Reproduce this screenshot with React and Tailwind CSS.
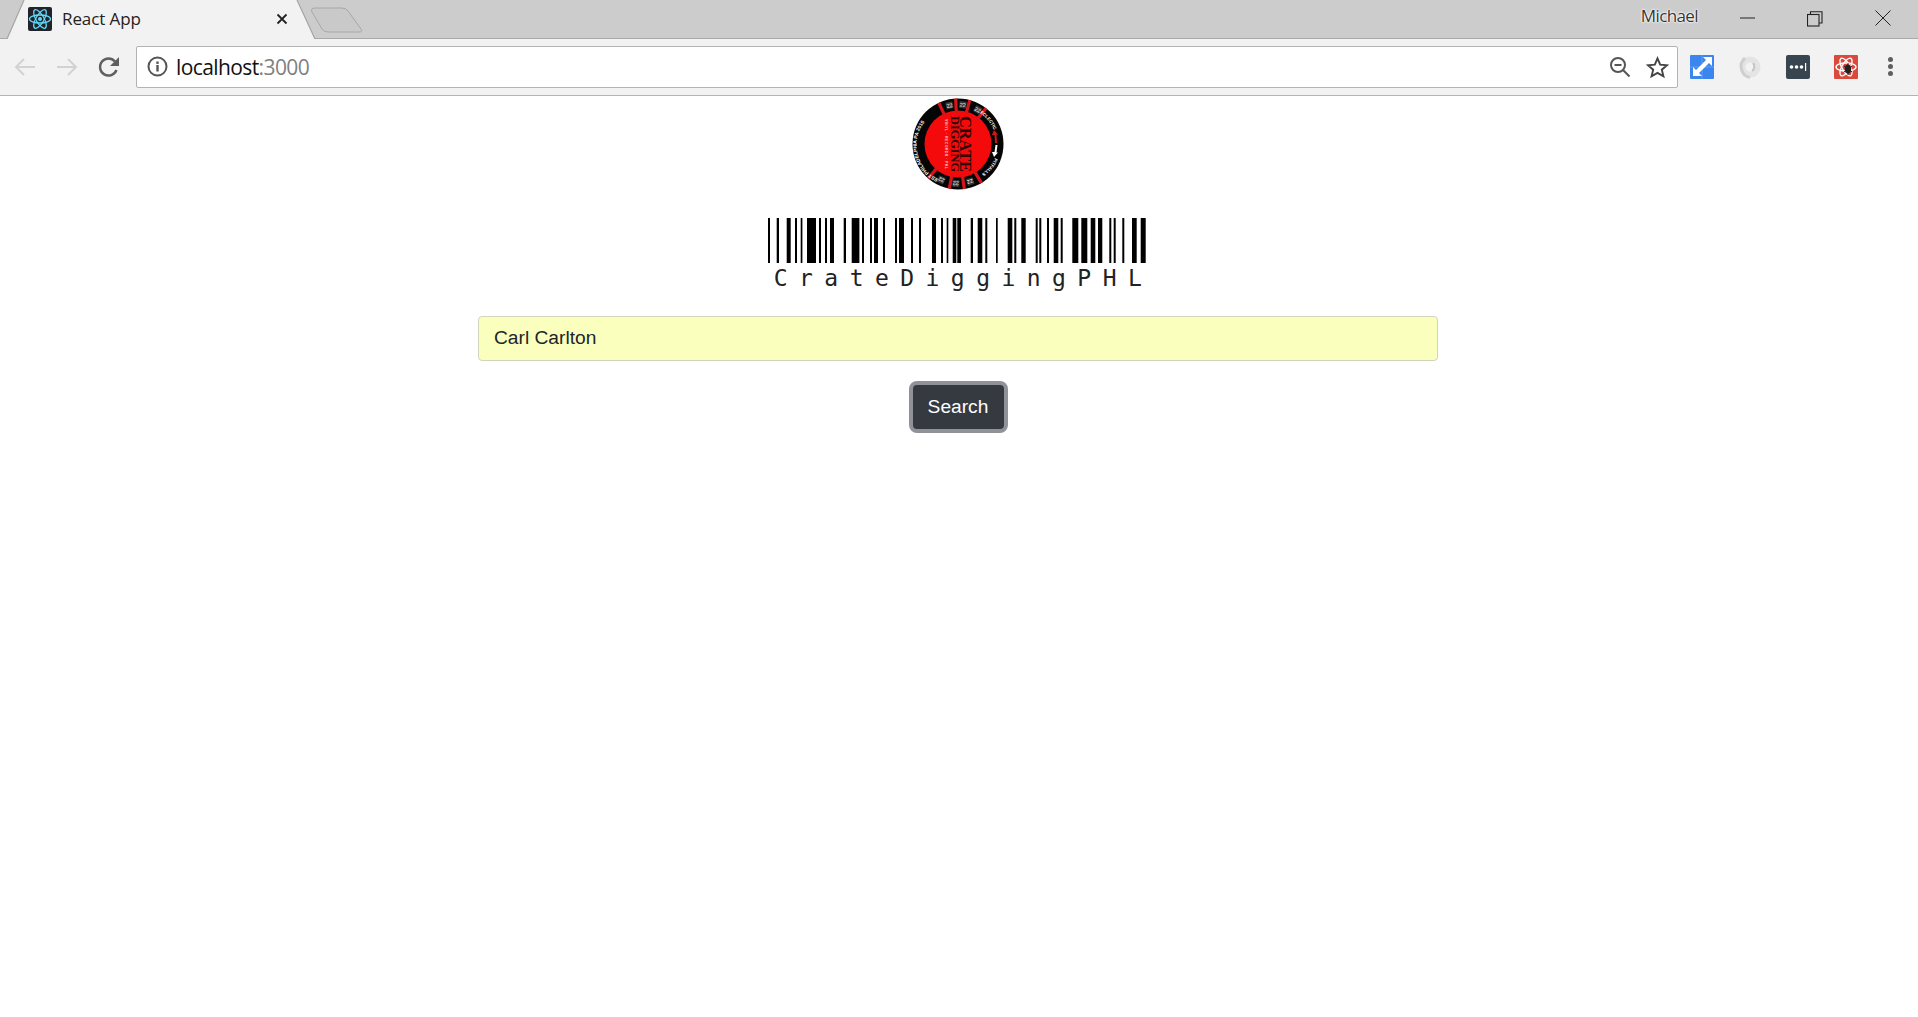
const bars = [
  [768, 770], [776.7, 779], [786.7, 790.7], [795, 797], [800.7, 802.4], [807, 816], [819, 821], [825, 827], [830, 834],
  [843.7, 846], [851.7, 859.4], [862, 864], [870, 872], [874, 878], [883, 885], [895, 897], [899, 904], [911, 913],
  [919, 921], [932, 936], [941, 943], [946.7, 948.3], [952.7, 956.3], [957.3, 961], [970.7, 973], [977.7, 982.3],
  [985.3, 987.3], [996, 997.7], [1007.7, 1012.3], [1014.3, 1016.3], [1021.3, 1025.7], [1035.7, 1037.7], [1039.3, 1041.3],
  [1047, 1049], [1053.7, 1058.3], [1060.7, 1062.7], [1072.3, 1078.3], [1081.3, 1087.3], [1090.7, 1095.3], [1098, 1102.3],
  [1109.3, 1111.3], [1113.7, 1115.7], [1122.3, 1124.3], [1132, 1136.7], [1140.7, 1145.7],
]

const spokes = [-115, -93, -75, -52, 131, 101, 82, 59]
const tiles = [-102.5, -83, -60, 115, 93, 72]

const Logo = () => (
  <svg width="92" height="92" viewBox="-46 -46 92 92">
    <circle r="45.5" fill="#050505" />
    <circle r="33.5" fill="#f40a0a" />
    {spokes.map((a) => (
      <rect key={a} x="31" y="-1.6" width="14.5" height="3.2" fill="#d8141a" transform={`rotate(${a})`} />
    ))}
    {tiles.map((a) => (
      <g key={a} transform={`rotate(${a}) translate(39.5 0) rotate(90)`}>
        <rect x="-3.5" y="-3.5" width="7" height="7" fill="#333" />
        <text textAnchor="middle" y="2" fontSize="5.5" fill="#fff" fontFamily="Liberation Sans, sans-serif">22</text>
      </g>
    ))}
    <defs>
      <path id="ring-left" d="M -20 35 A 37.5 37.5 0 0 1 -17 -34" />
      <path id="ring-right-top" d="M 22 -31 A 37.5 37.5 0 0 1 37 -11" />
      <path id="ring-right-bottom" d="M 37 14 A 37.5 37.5 0 0 1 22 31" />
    </defs>
    <text fontSize="4.9" fill="#fff" fontWeight="700" fontFamily="Liberation Sans, sans-serif">
      <textPath href="#ring-left">EST PHILADELPHIA PA 2015</textPath>
    </text>
    <text fontSize="4.4" fill="#fff" fontWeight="700" fontFamily="Liberation Sans, sans-serif">
      <textPath href="#ring-right-top">ECLECTIC</textPath>
    </text>
    <text fontSize="4.4" fill="#fff" fontWeight="700" fontFamily="Liberation Sans, sans-serif">
      <textPath href="#ring-right-bottom">PITFALLS</textPath>
    </text>
    <path d="M 37 -1 L 36.5 -9 L 34 -9 L 36 -14 L 40 -9.5 L 38.5 -9.5 L 39 -1 Z" fill="#d5141a" />
    <path d="M 37.5 1 L 36.5 8 L 34 8 L 36 13 L 40 8.5 L 38.5 8.5 L 39.5 1 Z" fill="#fff" />
    <g transform="rotate(90)" fontFamily="Liberation Serif, serif" fontWeight="700" textAnchor="middle">
      <text y="-2" fontSize="16" textLength="56" lengthAdjust="spacingAndGlyphs" fill="#2a0606">CRATE</text>
      <text y="7" fontSize="13" textLength="56" lengthAdjust="spacingAndGlyphs" fill="#2a0606">DIGGING</text>
      <text y="13" fontSize="3.6" textLength="50" fill="#ffc9c9" fontFamily="Liberation Sans, sans-serif">VINYL · RECORDS · PHL</text>
    </g>
  </svg>
)

const ReactFavicon = () => (
  <svg width="24" height="24" viewBox="0 0 24 24">
    <rect width="24" height="24" rx="2" fill="#20232a" />
    <g fill="none" stroke="#61dafb" strokeWidth="1.3">
      <ellipse cx="12" cy="12" rx="10.5" ry="4" />
      <ellipse cx="12" cy="12" rx="10.5" ry="4" transform="rotate(60 12 12)" />
      <ellipse cx="12" cy="12" rx="10.5" ry="4" transform="rotate(120 12 12)" />
    </g>
    <circle cx="12" cy="12" r="2" fill="#61dafb" />
  </svg>
)

const TabStrip = () => (
  <div className="relative flex h-[39px] items-center bg-[#cccccc] border-b border-[#a9a9a9]">
    <svg className="absolute left-0 top-0" width="370" height="39" viewBox="0 0 370 39">
      <path d="M7 39 L24 0 L297 0 L315 39 Z" fill="#f2f2f2" />
      <path d="M7 39 L24 0 M297 0 L315 39" stroke="#a5a5a5" strokeWidth="1.2" fill="none" />
      <path d="M315 8 L342 8 Q346 8 348 11 L361 29 Q363 32 359 32 L328 32 Q324 32 322 29 L312 12 Q310 8 315 8 Z" fill="#c9c9c9" stroke="#a8a8a8" strokeWidth="1" />
    </svg>
    <div className="relative ml-[28px]"><ReactFavicon /></div>
    <span className="relative ml-[10px] w-[214px] text-[17px] text-[#222] font-['Open_Sans',sans-serif] tracking-[-0.1px]">React App</span>
    <svg className="relative" width="12" height="12" viewBox="0 0 12 12">
      <path d="M1.5 1.5 L10.5 10.5 M10.5 1.5 L1.5 10.5" stroke="#222" strokeWidth="1.8" />
    </svg>
    <div className="ml-auto flex items-center">
      <span className="mr-[15px] -mt-[6px] text-[17px] text-[#333] font-['Open_Sans',sans-serif] tracking-[-0.6px] [text-shadow:0_0_1px_#fff,0_0_1px_#fff,0_0_2px_#fff,0_0_3px_#fff]">Michael</span>
      <div className="flex w-[68px] justify-center">
        <svg width="15" height="15" viewBox="0 0 15 15"><path d="M0 6 H15" stroke="#222" strokeWidth="1" /></svg>
      </div>
      <div className="flex w-[68px] justify-center">
        <svg width="16" height="16" viewBox="0 0 16 16" fill="none" stroke="#222" strokeWidth="1.1"><rect x="0.5" y="3.5" width="11.5" height="11.5" /><path d="M3.5 3.5 V0.7 H15 V12 H12" /></svg>
      </div>
      <div className="flex w-[68px] justify-center mr-[1px] -mt-[2px]">
        <svg width="16" height="16" viewBox="0 0 16 16"><path d="M0.5 0.5 L15.5 15.5 M15.5 0.5 L0.5 15.5" stroke="#222" strokeWidth="1" /></svg>
      </div>
    </div>
  </div>
)

const Toolbar = () => (
  <div className="flex h-[57px] items-center bg-[#f2f2f2] border-b border-[#b4b4b4] pb-[1px]">
    <div className="flex items-center gap-[20px] pl-[14px]">
      <svg width="22" height="20" viewBox="0 0 22 20" fill="none" stroke="#d2d2d2" strokeWidth="2"><path d="M21 10 H2 M10 2 L2 10 L10 18" /></svg>
      <svg width="22" height="20" viewBox="0 0 22 20" fill="none" stroke="#d2d2d2" strokeWidth="2"><path d="M1 10 H20 M12 2 L20 10 L12 18" /></svg>
      <svg width="22" height="22" viewBox="0 0 22 22" fill="none"><path d="M18.5 14 A8.5 8.5 0 1 1 17 5.5" stroke="#5f5f5f" strokeWidth="2.4" /><path d="M21 1 V10 H12 Z" fill="#5f5f5f" /></svg>
    </div>
    <div className="ml-[16px] flex h-[42px] w-[1542px] items-center rounded-[2px] border border-[#b3b3b3] bg-white pl-[10px] pr-[8px]">
      <svg width="21" height="21" viewBox="0 0 21 21" fill="none"><circle cx="10.5" cy="10.5" r="9" stroke="#555" strokeWidth="2" /><rect x="9.3" y="9" width="2.4" height="6.5" fill="#555" /><rect x="9.3" y="5.5" width="2.4" height="2.4" fill="#555" /></svg>
      <span className="ml-[8px] mt-[2px] text-[21px] text-[#111] font-['Open_Sans',sans-serif] tracking-[-0.6px]">localhost<span className="text-[#808080]">:3000</span></span>
      <div className="ml-auto flex items-center gap-[15px]">
        <svg width="22" height="22" viewBox="0 0 22 22" fill="none" stroke="#555" strokeWidth="2"><circle cx="9" cy="9" r="7" /><path d="M5.5 9 H12.5 M14 14 L20.5 20.5" /></svg>
        <svg width="23" height="22" viewBox="0 0 24 23" fill="none" stroke="#444" strokeWidth="2"><path d="M12 2.5 L14.8 9 L22 9.6 L16.5 14.3 L18.2 21.2 L12 17.6 L5.8 21.2 L7.5 14.3 L2 9.6 L9.2 9 Z" /></svg>
      </div>
    </div>
    <div className="ml-[12px] flex items-center gap-[24px]">
      <svg width="24" height="24" viewBox="0 0 24 24">
        <rect width="24" height="24" rx="1" fill="#3b86ee" />
        <path d="M0 12 H24 M12 0 V24" stroke="#78aaf3" strokeWidth="0.7" />
        <path d="M13 2 H22 V11 L19 8 L9 18 L12 21 H3 V12 L6 15 L16 5 Z" fill="#fff" />
      </svg>
      <svg width="24" height="24" viewBox="0 0 24 24" fill="none">
        <circle cx="12" cy="12" r="7.5" stroke="#e4e4e4" strokeWidth="6" />
        <path d="M7 3 C0 9 3 21 12 22.5" stroke="#cfcfcf" strokeWidth="3" />
        <path d="M15 8 C17 10 17 14 14 16" stroke="#c4c4c4" strokeWidth="2" />
      </svg>
      <svg width="24" height="24" viewBox="0 0 24 24">
        <rect width="24" height="24" rx="2" fill="#38444f" />
        <circle cx="5.5" cy="12" r="1.8" fill="#fff" /><circle cx="10.5" cy="12" r="1.8" fill="#fff" /><circle cx="15.5" cy="12" r="1.8" fill="#fff" />
        <rect x="19" y="8" width="1.2" height="8" fill="#fff" />
      </svg>
      <svg width="24" height="24" viewBox="0 0 24 24">
        <rect width="24" height="24" rx="1" fill="#d94a3d" />
        <g fill="none" stroke="#fff" strokeWidth="1.4">
          <ellipse cx="12" cy="12" rx="10" ry="4" />
          <ellipse cx="12" cy="12" rx="10" ry="4" transform="rotate(60 12 12)" />
          <ellipse cx="12" cy="12" rx="10" ry="4" transform="rotate(120 12 12)" />
        </g>
        <ellipse cx="14" cy="14" rx="3.2" ry="4.5" fill="#222" />
        <path d="M10 11 L18 17 M10 17 L18 11 M14 8 V20" stroke="#222" strokeWidth="1" />
      </svg>
    </div>
    <div className="ml-[30px] flex flex-col gap-[2px]">
      <span className="h-[5px] w-[5px] rounded-full bg-[#5f5f5f]"></span>
      <span className="h-[5px] w-[5px] rounded-full bg-[#5f5f5f]"></span>
      <span className="h-[5px] w-[5px] rounded-full bg-[#5f5f5f]"></span>
    </div>
  </div>
)

const App = () => {
  return (
    <div className="min-h-screen bg-white">
      <TabStrip />
      <Toolbar />
      <main className="flex flex-col items-center pr-[2px] pt-[2px]">
        <Logo />
        <svg className="mt-[28px]" width="380" height="45" viewBox="768 0 380 45">
          {bars.map(([a, b]) => (
            <rect key={a} x={a} y="0" width={b - a} height="45" fill="#000" />
          ))}
        </svg>
        <div className="h-[30px] text-[23px] leading-[30px] pl-[11px] text-[#222] font-['DejaVu_Sans_Mono',monospace] tracking-[11.45px]">CrateDiggingPHL</div>
        <input
          defaultValue="Carl Carlton"
          className="mt-[23px] h-[45px] w-[960px] rounded-[4px] border border-[#d2d4bd] bg-[#faffbd] px-[15px] pb-[2px] text-[19.2px] text-[#212529] font-['Liberation_Sans',sans-serif] outline-none"
        />
        <button className="mt-[20px] h-[52px] w-[99px] rounded-[8px] border-[4px] border-[#8f9296] bg-[#343a40] text-[19.2px] text-white font-['Liberation_Sans',sans-serif]">Search</button>
      </main>
    </div>
  )
}

export default App
